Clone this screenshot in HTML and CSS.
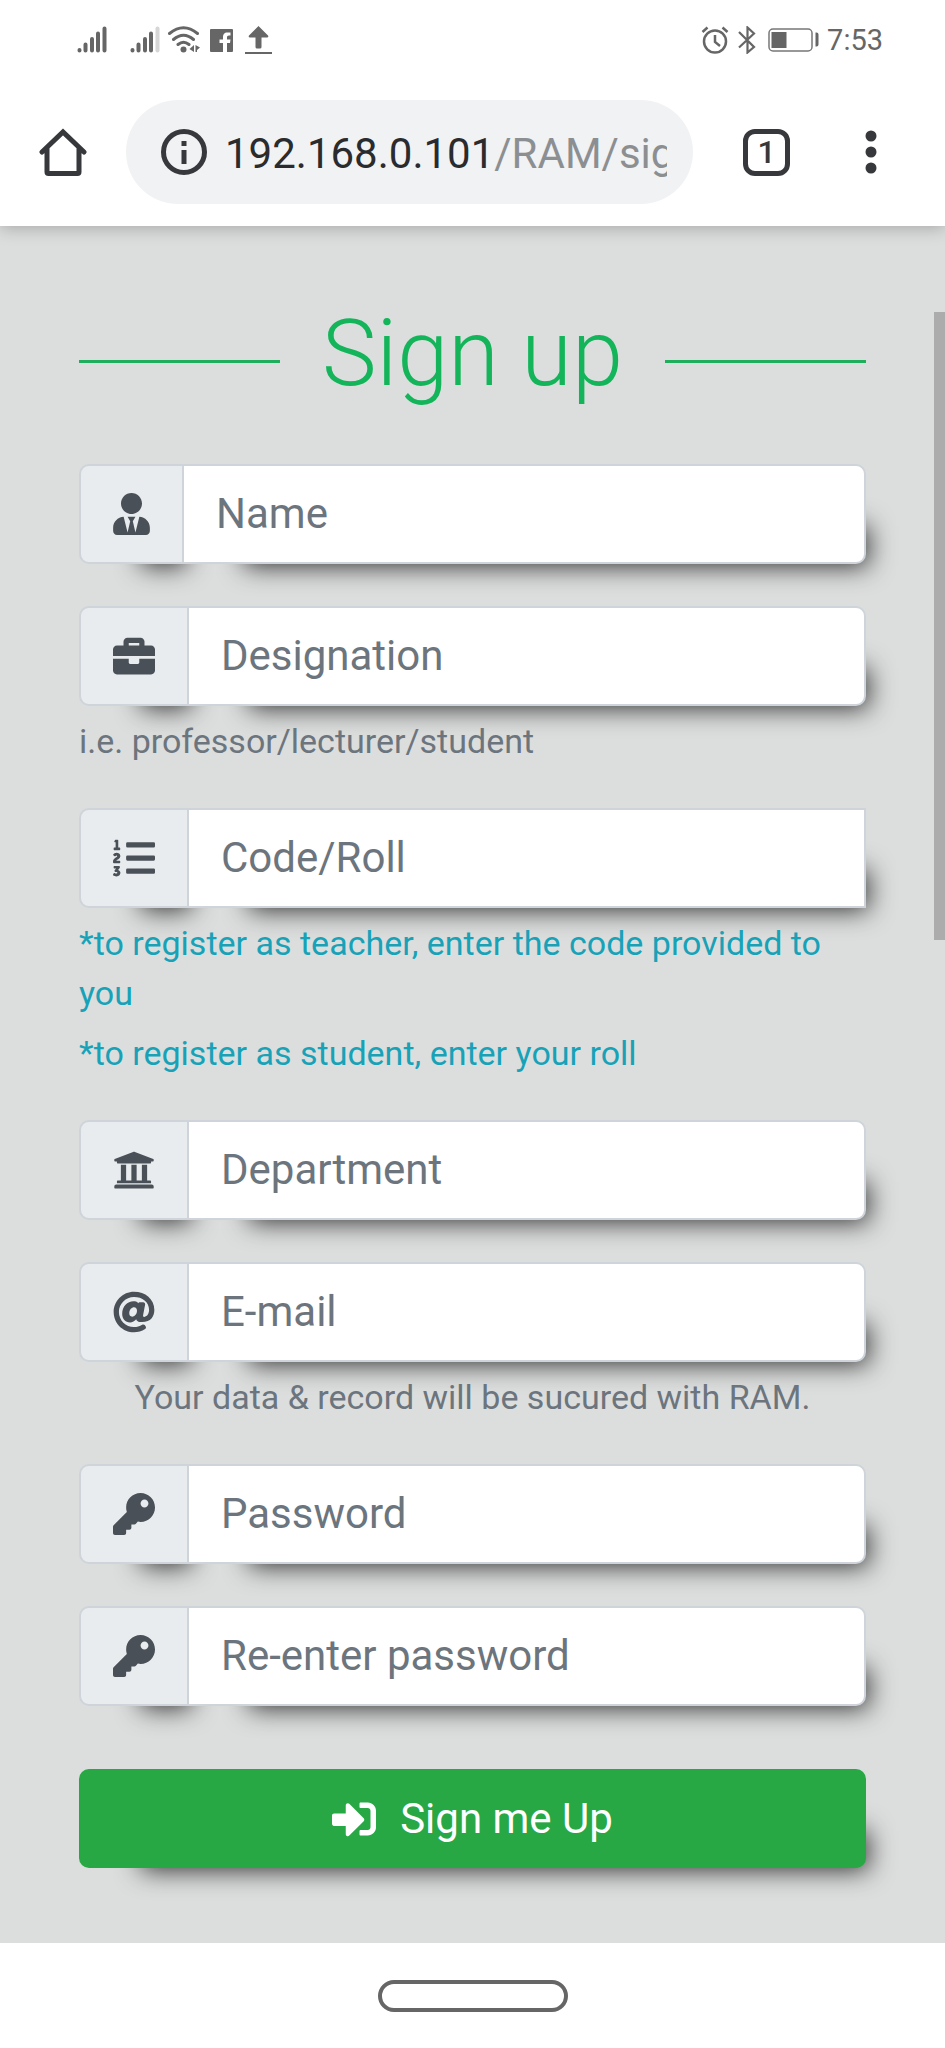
FILE: index.html
```html
<!DOCTYPE html>
<html lang="en">
<head>
<meta charset="utf-8">
<meta name="viewport" content="width=device-width, initial-scale=1">
<title>Sign up</title>
<link rel="stylesheet" href="styles.css">
</head>
<body>
<div class="device">
  <div class="status">
    <svg class="status-signal" width="30" height="28" viewBox="0 0 30 28" aria-hidden="true"><g stroke="#666" stroke-width="4" stroke-linecap="round"><path d="M2.500 24v0.500M8.500 18.500v6M15 13v11.500M21 7.500v17M27.500 2.500v22"/></g></svg>
    <svg class="status-signal-2" width="30" height="28" viewBox="0 0 30 28" aria-hidden="true"><g stroke="#666" stroke-width="4" stroke-linecap="round"><path d="M2.500 24v0.500M8.500 18.500v6M15 13v11.500M21 7.500v17"/><path stroke="#d6d6d6" d="M27.500 2.500v22"/></g></svg>
    <svg class="status-wifi" width="34" height="28" viewBox="0 0 34 28" aria-hidden="true"><g fill="none" stroke="#666" stroke-width="3" stroke-linecap="round"><path d="M2.500 7.500Q16.500-4 30.500 7.500M6.500 13.500q10-8.500 20 0M11 18.500q5.500-4.500 11 0"/></g><circle cx="16.500" cy="23.500" r="3" fill="#666"/><path d="M27 19v7l-4.500-3zM28.500 19v7h1.500v-2l3-2.500z" fill="#666"/></svg>
    <svg class="status-fb" width="23" height="23" viewBox="0 0 23 23" aria-hidden="true"><path d="M1 0h21a1 1 0 0 1 1 1v21a1 1 0 0 1-1 1h-5v-9h3l.5-3.500H17V8.500c0-1.200.5-2 2-2h1.500V3.500h-3c-3.300 0-4.500 2-4.500 5v2H9.500V14H13v9H1a1 1 0 0 1-1-1V1a1 1 0 0 1 1-1z" fill="#666"/></svg>
    <svg class="status-up" width="27" height="28" viewBox="0 0 27 28" aria-hidden="true"><path d="M13.500 0L23 9.500q1 2-1 2h-5.500V21q0 1.500-1.500 1.500h-3q-1.500 0-1.500-1.500v-9.500H5q-2 0-1-2zM0 26h27v2H0z" fill="#666"/></svg>
    <svg class="status-alarm" width="28" height="28" viewBox="0 0 28 28" aria-hidden="true"><g fill="none" stroke="#666" stroke-width="2.500"><circle cx="14" cy="15.500" r="11"/><path d="M14 9v7l5 4M1.500 6l5-4.500M26.500 6l-5-4.500"/></g></svg>
    <svg class="status-bt" width="18" height="28" viewBox="0 0 18 28" aria-hidden="true"><path d="M1 6l15 15-6.500 5.500v-25L16 7.500 1 21.500" fill="none" stroke="#666" stroke-width="2.200"/></svg>
    <svg class="status-battery" width="51" height="24" viewBox="0 0 51 24" aria-hidden="true"><rect x="1" y="1" width="43" height="22" rx="4" fill="none" stroke="#777" stroke-width="1.500"/><path d="M3.500 4h15v16h-15zM47.500 4.500h1q2 0 2 2v10q0 2-2 2h-1z" fill="#666"/></svg>
    <span class="status-time">7:53</span>
  </div>
  <header class="toolbar">
    <button class="icon-button" type="button" aria-label="Home"><svg width="48" height="48" viewBox="0 0 48 48"><path d="M3 24L24 4l21 20M8 20v24q0 1.500 1.500 1.500h29q1.500 0 1.500-1.500V20" fill="none" stroke="#37383b" stroke-width="5" stroke-linecap="round" stroke-linejoin="miter"/></svg></button>
    <div class="omnibox">
      <svg class="omnibox-icon" width="46" height="46" viewBox="0 0 46 46" aria-hidden="true"><circle cx="23" cy="23" r="20.500" fill="none" stroke="#37383b" stroke-width="5"/><path d="M20.500 12h5v5h-5zM20.500 21h5v14h-5z" fill="#37383b"/></svg>
      <span class="url">192.168.0.101<span class="url-path">/RAM/sig</span></span>
    </div>
    <button class="tabs" type="button" aria-label="Open tabs">1</button>
    <button class="icon-button" type="button" aria-label="Menu"><svg width="12" height="44" viewBox="0 0 12 44"><g fill="#37383b"><circle cx="6" cy="6" r="5.500"/><circle cx="6" cy="22" r="5.500"/><circle cx="6" cy="38" r="5.500"/></g></svg></button>
  </header>
  <main class="page">
    <div class="scrollbar"></div>
    <h1 class="title">Sign up</h1>
    <form class="form">
      <div class="group">
        <div class="field">
          <label class="addon" for="name"><svg width="37" height="42" viewBox="0 0 448 512" aria-label="Name"><path d="M224 256c70.700 0 128-57.300 128-128S294.700 0 224 0 96 57.300 96 128s57.300 128 128 128zm95.800 32.600L272 480l-32-136 32-56h-96l32 56-32 136-47.800-191.400C56.900 292 0 350.300 0 422.400V464c0 26.500 21.500 48 48 48h352c26.500 0 48-21.500 48-48v-41.600c0-72.100-56.900-130.400-128.200-133.800z"/></svg></label>
          <input class="input" id="name" type="text" placeholder="Name">
        </div>
      </div>
      <div class="group">
        <div class="field">
          <label class="addon" for="designation"><svg width="42" height="42" viewBox="0 0 512 512" aria-label="Designation"><path d="M320 336c0 8.840-7.160 16-16 16h-96c-8.840 0-16-7.160-16-16v-48H0v144c0 25.600 22.400 48 48 48h416c25.600 0 48-22.400 48-48V288H320v48zm144-208h-80V80c0-25.600-22.400-48-48-48H176c-25.600 0-48 22.400-48 48v48H48c-25.600 0-48 22.400-48 48v80h512v-80c0-25.600-22.400-48-48-48zm-144 0H192V96h128v32z"/></svg></label>
          <input class="input" id="designation" type="text" placeholder="Designation">
        </div>
        <small class="hint">i.e. professor/lecturer/student</small>
      </div>
      <div class="group">
        <div class="field">
          <label class="addon" for="code"><svg width="42" height="42" viewBox="0 0 512 512" aria-label="Code or roll"><path d="M61.770 401l17.500-20.150a19.920 19.920 0 0 0 5.070-14.190v-3.310C84.340 356 80.500 352 73 352H16a8 8 0 0 0-8 8v16a8 8 0 0 0 8 8h22.830a157.410 157.410 0 0 0-11 12.310l-5.610 7c-4 5.070-5.250 10.130-2.800 14.880l1.050 1.930c3 5.760 6.290 7.880 12.250 7.880h4.730c10.330 0 15.940 2.440 15.940 9.090 0 4.720-4.200 8.220-14.360 8.220a41.540 41.540 0 0 1-15.470-3.120c-6.490-3.880-11.740-3.500-15.600 3.120l-5.590 9.310c-3.720 6.130-3.190 11.720 2.630 15.940 7.710 4.690 20.380 9.440 37 9.440 34.160 0 48.500-22.750 48.500-44.120-.03-14.380-9.120-29.760-28.730-34.880zM496 224H176a16 16 0 0 0-16 16v32a16 16 0 0 0 16 16h320a16 16 0 0 0 16-16v-32a16 16 0 0 0-16-16zm0-160H176a16 16 0 0 0-16 16v32a16 16 0 0 0 16 16h320a16 16 0 0 0 16-16V80a16 16 0 0 0-16-16zm0 320H176a16 16 0 0 0-16 16v32a16 16 0 0 0 16 16h320a16 16 0 0 0 16-16v-32a16 16 0 0 0-16-16zM16 160h64a8 8 0 0 0 8-8v-16a8 8 0 0 0-8-8H64V40a8 8 0 0 0-8-8H32a8 8 0 0 0-7.140 4.420l-8 16A8 8 0 0 0 24 64h8v64H16a8 8 0 0 0-8 8v16a8 8 0 0 0 8 8zm-3.910 160H80a8 8 0 0 0 8-8v-16a8 8 0 0 0-8-8H41.320c3.290-10.290 48.340-18.680 48.340-56.440 0-29.060-25-39.560-44.470-39.560-21.360 0-33.800 10-40.460 18.750-4.370 5.590-3 10.840 2.800 15.370l8.580 6.880c5.610 4.560 11 2.470 16.120-2.440a13.440 13.440 0 0 1 9.460-3.840c3.330 0 9.280 1.560 9.280 8.750C51 248.190 0 257.310 0 304.590v4C0 316 5.080 320 12.090 320z"/></svg></label>
          <input class="input input-square" id="code" type="text" placeholder="Code/Roll">
        </div>
        <small class="hint hint-info">*to register as teacher, enter the code provided to you</small>
        <small class="hint hint-info">*to register as student, enter your roll</small>
      </div>
      <div class="group">
        <div class="field">
          <label class="addon" for="department"><svg width="42" height="42" viewBox="0 0 512 512" aria-label="Department"><path d="M496 128v16a8 8 0 0 1-8 8h-24v12c0 6.627-5.373 12-12 12H60c-6.627 0-12-5.373-12-12v-12H24a8 8 0 0 1-8-8v-16a8 8 0 0 1 4.941-7.392l232-88a7.996 7.996 0 0 1 6.118 0l232 88A8 8 0 0 1 496 128zm-24 304H40c-13.255 0-24 10.745-24 24v16a8 8 0 0 0 8 8h464a8 8 0 0 0 8-8v-16c0-13.255-10.745-24-24-24zM96 192v192H60c-6.627 0-12 5.373-12 12v20h416v-20c0-6.627-5.373-12-12-12h-36V192h-64v192h-64V192h-64v192h-64V192H96z"/></svg></label>
          <input class="input" id="department" type="text" placeholder="Department">
        </div>
      </div>
      <div class="group">
        <div class="field">
          <label class="addon" for="email"><svg width="42" height="42" viewBox="0 0 512 512" aria-label="E-mail"><path d="M256 8C118.941 8 8 118.919 8 256c0 137.059 110.919 248 248 248 48.154 0 95.342-14.140 135.408-40.223 12.005-7.815 14.625-24.288 5.552-35.372l-10.177-12.433c-7.671-9.371-21.179-11.667-31.373-5.129C325.920 429.757 291.314 440 256 440c-101.458 0-184-82.542-184-184S154.542 72 256 72c100.139 0 184 57.619 184 160 0 38.786-21.093 79.742-58.170 83.693-17.349-.454-16.910-12.857-13.476-30.024l23.433-121.110C394.653 149.750 383.308 136 368.225 136h-44.981a13.518 13.518 0 0 0-13.432 11.993l-.01.092c-14.697-17.901-40.448-21.775-59.971-21.775-74.580 0-137.831 62.234-137.831 151.460 0 65.303 36.785 105.870 96 105.870 26.984 0 57.369-15.637 74.991-38.333 9.522 34.104 40.613 34.103 70.710 34.103C462.609 379.410 504 307.798 504 232 504 95.653 394.023 8 256 8zm-21.680 304.430c-22.249 0-36.070-15.623-36.070-40.771 0-44.993 30.779-72.729 58.630-72.729 22.292 0 35.601 15.241 35.601 40.770 0 45.061-33.875 72.730-58.161 72.730z"/></svg></label>
          <input class="input" id="email" type="email" placeholder="E-mail">
        </div>
        <small class="hint hint-center">Your data &amp; record will be sucured with RAM.</small>
      </div>
      <div class="group">
        <div class="field">
          <label class="addon" for="password"><svg width="42" height="42" viewBox="0 0 512 512" aria-label="Password"><path d="M512 176.001C512 273.203 433.202 352 336 352c-11.220 0-22.190-1.062-32.827-3.069l-24.012 27.014A23.999 23.999 0 0 1 261.223 384H224v40c0 13.255-10.745 24-24 24h-40v40c0 13.255-10.745 24-24 24H24c-13.255 0-24-10.745-24-24v-78.059c0-6.365 2.529-12.470 7.029-16.971l161.802-161.802C163.108 213.814 160 195.271 160 176 160 78.798 238.797.001 335.999 0 433.488-.001 512 78.511 512 176.001zM336 128c0 26.510 21.490 48 48 48s48-21.490 48-48-21.490-48-48-48-48 21.490-48 48z"/></svg></label>
          <input class="input" id="password" type="password" placeholder="Password">
        </div>
      </div>
      <div class="group">
        <div class="field">
          <label class="addon" for="confirm"><svg width="42" height="42" viewBox="0 0 512 512" aria-label="Re-enter password"><path d="M512 176.001C512 273.203 433.202 352 336 352c-11.220 0-22.190-1.062-32.827-3.069l-24.012 27.014A23.999 23.999 0 0 1 261.223 384H224v40c0 13.255-10.745 24-24 24h-40v40c0 13.255-10.745 24-24 24H24c-13.255 0-24-10.745-24-24v-78.059c0-6.365 2.529-12.470 7.029-16.971l161.802-161.802C163.108 213.814 160 195.271 160 176 160 78.798 238.797.001 335.999 0 433.488-.001 512 78.511 512 176.001zM336 128c0 26.510 21.490 48 48 48s48-21.490 48-48-21.490-48-48-48-48 21.490-48 48z"/></svg></label>
          <input class="input" id="confirm" type="password" placeholder="Re-enter password">
        </div>
      </div>
      <button class="submit" type="button"><svg width="44" height="44" viewBox="0 0 512 512" aria-hidden="true"><path d="M416 448h-84c-6.600 0-12-5.400-12-12v-40c0-6.600 5.400-12 12-12h84c17.700 0 32-14.300 32-32V160c0-17.700-14.300-32-32-32h-84c-6.600 0-12-5.400-12-12V76c0-6.600 5.400-12 12-12h84c53 0 96 43 96 96v192c0 53-43 96-96 96zm-47-201L201 79c-15-15-41-4.500-41 17v96H24c-13.300 0-24 10.700-24 24v96c0 13.300 10.700 24 24 24h136v96c0 21.500 26 32 41 17l168-168c9.300-9.400 9.300-24.600 0-34z"/></svg>Sign me Up</button>
    </form>
  </main>
  <nav class="navbar"><button class="home-pill" type="button" aria-label="Home"></button></nav>
</div>
</body>
</html>
```
FILE: styles.css
```css
* {
  box-sizing: border-box;
}

body {
  margin: 0;
  font-family: Roboto, "Liberation Sans", sans-serif;
  font-size: 42px;
  background: #fff;
}

button,
input {
  font: inherit;
}

button {
  padding: 0;
  border: 0;
  background: none;
}

svg {
  display: block;
  flex: none;
}

.device {
  display: flex;
  flex-direction: column;
  min-height: 100vh;
}

.status {
  position: relative;
  z-index: 2;
  display: flex;
  align-items: center;
  height: 80px;
  padding: 0 62px 0 77px;
  background: #fff;
  color: #666;
}

.status-signal {
  margin-right: 23px;
}

.status-signal-2 {
  margin-right: 7px;
}

.status-wifi {
  margin-right: 9px;
}

.status-fb {
  margin-right: 12px;
}

.status-alarm {
  margin-left: auto;
}

.status-bt {
  margin: 0 12px 0 9px;
}

.status-time {
  margin-left: 8px;
  font-size: 29px;
}

.toolbar {
  position: relative;
  z-index: 1;
  display: flex;
  align-items: center;
  padding: 20px 68px 22px 39px;
  background: #fff;
  box-shadow: 0 2px 16px rgba(0, 0, 0, 0.25);
}

.omnibox {
  display: flex;
  flex: 1;
  align-items: center;
  gap: 18px;
  min-width: 0;
  height: 104px;
  margin: 0 50px 0 39px;
  padding: 0 26px 0 35px;
  border-radius: 52px;
  background: #f1f2f4;
}

.url {
  flex: 1;
  overflow: hidden;
  padding-top: 2px;
  color: #2a2b2e;
  white-space: nowrap;
}

.url-path {
  color: #8c8f92;
}

.tabs {
  width: 47px;
  height: 47px;
  margin-right: 75px;
  border: 5px solid #37383b;
  border-radius: 12px;
  color: #37383b;
  font-size: 32px;
  font-weight: 500;
  line-height: 37px;
}

.page {
  position: relative;
  flex: 1;
  padding: 73px 79px 75px;
  background: #dcdedd;
}

.scrollbar {
  position: absolute;
  top: 86px;
  right: 0;
  width: 11px;
  height: 628px;
  background: #acacac;
}

.title {
  display: flex;
  align-items: center;
  gap: 42px;
  margin: 0 0 55px;
  color: #14b55a;
  font-size: 92px;
  font-weight: 300;
  line-height: 110px;
}

.title::before,
.title::after {
  content: "";
  flex: 1;
  height: 3px;
  margin-top: 14px;
  background: #1fae5b;
}

.form {
  display: flex;
  flex-direction: column;
  gap: 42px;
}

.group {
  display: flex;
  flex-direction: column;
  gap: 10px;
}

.field {
  display: flex;
  height: 100px;
}

.addon {
  display: flex;
  align-items: center;
  padding: 0 32px;
  border: 2px solid #ced4da;
  border-radius: 10px 0 0 10px;
  background: #e9ecef;
  fill: #495057;
  box-shadow: 32px 32px 26px -30px rgba(0, 0, 0, 0.8);
}

.input {
  flex: 1;
  min-width: 0;
  margin-left: -2px;
  padding: 0 32px 2px;
  border: 2px solid #ced4da;
  border-radius: 0 10px 10px 0;
  background: #fff;
  color: #495057;
  box-shadow: 32px 32px 26px -30px rgba(0, 0, 0, 0.8);
}

.input-square {
  border-radius: 0;
}

.input::placeholder {
  color: #6c757d;
  opacity: 1;
}

.hint {
  color: #6c757d;
  font-size: 34px;
  line-height: 50px;
}

.hint-info {
  color: #17a2b8;
}

.hint-center {
  text-align: center;
}

.submit {
  display: flex;
  align-items: center;
  justify-content: center;
  gap: 24px;
  height: 99px;
  margin-top: 21px;
  border-radius: 10px;
  background: #28a745;
  color: #fff;
  fill: #fff;
  box-shadow: 32px 32px 26px -30px rgba(0, 0, 0, 0.8);
}

.navbar {
  display: flex;
  align-items: center;
  justify-content: center;
  height: 105px;
  background: #fff;
}

.home-pill {
  width: 190px;
  height: 32px;
  border: 4px solid #666;
  border-radius: 16px;
}
```
